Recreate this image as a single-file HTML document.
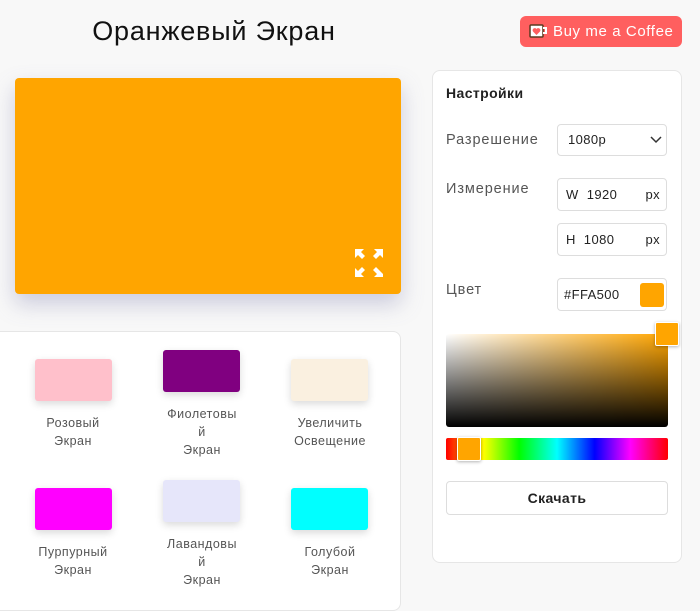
<!DOCTYPE html>
<html><head><meta charset="utf-8"><style>
*{box-sizing:border-box;margin:0;padding:0}
body{width:700px;height:593px;overflow:hidden;background:#f8f8f8;font-family:"Liberation Sans",sans-serif;position:relative;color:#333}
.a{position:absolute}
h1{position:absolute;left:0;width:428px;top:16px;text-align:center;font-weight:normal;font-size:27px;letter-spacing:.8px;color:#111}
.buy{left:520px;top:16px;width:162px;height:31px;background:#ff5f5f;border-radius:6px;color:#fff;font-size:15px;letter-spacing:.6px;line-height:31px;padding-left:33px}
.prev{left:15px;top:78px;width:386px;height:216px;background:#ffa500;border-radius:4px;box-shadow:0 10px 22px rgba(120,120,170,.35)}
.card{left:-8px;top:331px;width:409px;height:280px;background:#fff;border:1px solid #e6e6e6;border-radius:8px}
.sw{position:absolute;width:77px;height:42px;border-radius:3px;box-shadow:0 3px 8px rgba(0,0,0,.15)}
.lb{position:absolute;width:120px;text-align:center;font-size:12.5px;letter-spacing:.5px;line-height:18px;color:#555}
.panel{left:432px;top:70px;width:250px;height:493px;background:#fff;border:1px solid #e6e6e6;border-radius:8px}
.lab{position:absolute;left:446px;font-size:14.5px;letter-spacing:.9px;color:#555}
.in{position:absolute;left:557px;width:110px;background:#fff;border:1px solid #ddd;border-radius:4px;font-size:13px;letter-spacing:.4px;color:#222;padding-left:8px}
</style></head><body>
<h1>Оранжевый Экран</h1>
<div class="a buy"><svg class="a" style="left:9px;top:8px" width="20" height="15" viewBox="0 0 20 15"><rect x="1" y="1" width="13" height="12" rx="1" fill="#fff" stroke="#5a3a20" stroke-width="1.5"/><path d="M14 4h3v5h-3" fill="none" stroke="#fff" stroke-width="2"/><path d="M7.5 11L4 7.5a2 2 0 0 1 3.5-2.5a2 2 0 0 1 3.5 2.5z" fill="#ff5f5f"/></svg>Buy me a Coffee</div>
<div class="a prev"><svg class="a" style="left:339px;top:170px" width="30" height="30" viewBox="0 0 30 30" fill="#fff"><path d="M1 1h9l-3 3 4 4-3 3-4-4-3 3z"/><path d="M29 1h-9l3 3-4 4 3 3 4-4 3 3z"/><path d="M1 29h9l-3-3 4-4-3-3-4 4-3-3z"/><path d="M29 29h-9l3-3-4-4 3-3 4 4 3 3z"/></svg></div>
<div class="a card"></div>
<div class="sw" style="left:35px;top:359px;background:#ffc0cb"></div>
<div class="sw" style="left:163px;top:350px;background:#800080"></div>
<div class="sw" style="left:291px;top:359px;background:#faf0e0"></div>
<div class="sw" style="left:35px;top:488px;background:#ff00ff"></div>
<div class="sw" style="left:163px;top:480px;background:#e6e6fa"></div>
<div class="sw" style="left:291px;top:488px;background:#00ffff"></div>
<div class="lb" style="left:13px;top:414px">Розовый<br>Экран</div>
<div class="lb" style="left:142px;top:405px">Фиолетовы<br>й<br>Экран</div>
<div class="lb" style="left:270px;top:414px">Увеличить<br>Освещение</div>
<div class="lb" style="left:13px;top:543px">Пурпурный<br>Экран</div>
<div class="lb" style="left:142px;top:535px">Лавандовы<br>й<br>Экран</div>
<div class="lb" style="left:270px;top:543px">Голубой<br>Экран</div>
<div class="a panel"></div>
<div class="a" style="left:446px;top:85px;font-size:14px;font-weight:bold;letter-spacing:.4px;color:#222">Настройки</div>
<div class="lab" style="top:132px">Разрешение</div>
<div class="lab" style="top:181px">Измерение</div>
<div class="lab" style="top:282px">Цвет</div>
<div class="in" style="top:124px;height:32px;line-height:30px;padding-left:10px">1080p<svg class="a" style="left:92px;top:11px" width="12" height="8" viewBox="0 0 12 8"><path d="M1 1l5 5 5-5" fill="none" stroke="#333" stroke-width="1.5"/></svg></div>
<div class="in" style="top:178px;height:33px;line-height:31px">W&nbsp; 1920<span class="a" style="right:6px">px</span></div>
<div class="in" style="top:223px;height:33px;line-height:31px">H&nbsp; 1080<span class="a" style="right:6px">px</span></div>
<div class="in" style="top:278px;height:33px;line-height:31px;padding-left:6px">#FFA500<div class="a" style="left:82px;top:4px;width:24px;height:24px;background:#ffa500;border-radius:3px"></div></div>
<div class="a" style="left:446px;top:334px;width:222px;height:93px;border-radius:3px;background:linear-gradient(to top,#000,rgba(0,0,0,0)),linear-gradient(to right,#fff,#ffa500)"></div>
<div class="a" style="left:655px;top:322px;width:24px;height:24px;background:#ffa500;border:1px solid #fff;border-radius:2px;box-shadow:0 1px 3px rgba(0,0,0,.3)"></div>
<div class="a" style="left:446px;top:438px;width:222px;height:22px;border-radius:2px;background:linear-gradient(to right,#f00,#ff0 17%,#0f0 33%,#0ff 50%,#00f 67%,#f0f 83%,#f00)"></div>
<div class="a" style="left:457px;top:437px;width:24px;height:24px;background:#ffa500;border:1px solid #fff;border-radius:2px;box-shadow:0 1px 3px rgba(0,0,0,.3)"></div>
<div class="a" style="left:446px;top:481px;width:222px;height:34px;border:1px solid #ddd;border-radius:4px;text-align:center;line-height:32px;font-size:14px;font-weight:bold;letter-spacing:.4px;color:#222">Скачать</div>
</body></html>
